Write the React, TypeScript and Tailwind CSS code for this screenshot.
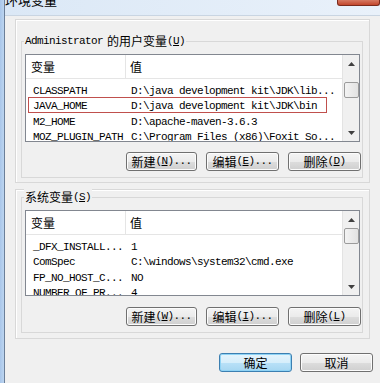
import React from "react";

const F = "font-['Liberation_Mono','Noto_Sans_CJK_SC',monospace]";
const CJK = "font-['Noto_Sans_CJK_SC','Liberation_Sans',sans-serif]";

function M({ children }: { children: React.ReactNode }) {
  return <span className={`${F} text-[11px] tracking-[-0.6px]`}>{children}</span>;
}

function Btn({ cn, w, def, children }: { cn: string; w: string; def?: boolean; children?: React.ReactNode }) {
  return (
    <div
      className={`${w} h-[19px] rounded-[3px] border flex items-center justify-center text-[12px] leading-none text-black ${
        def
          ? "border-[#3c7fb1] bg-[linear-gradient(#e5f4fc_0%,#d6eefb_50%,#b9e1f8_51%,#a6d6f1_100%)] shadow-[inset_0_0_0_1px_#8fd3f5]"
          : "border-[#707070] bg-[linear-gradient(#f4f4f4_0%,#ebebeb_50%,#dddddd_51%,#cfcfcf_100%)] shadow-[inset_0_0_0_1px_#fcfcfc]"
      }`}
    >
      <span className={CJK}>{cn}</span>
      {children}
    </div>
  );
}

function Scroll({ thumbTop }: { thumbTop: string }) {
  return (
    <div className="w-[17px] h-full bg-[#f0f0f0] border-l border-[#e3e3e3] flex flex-col items-center">
      <div className="h-[17px] w-full flex items-center justify-center">
        <svg width="7" height="4" viewBox="0 0 7 4"><path d="M0 4 L3.5 0 L7 4 Z" fill="#404040" /></svg>
      </div>
      <div className={`${thumbTop} w-[15px] h-[16px] rounded-[2px] border border-[#9b9b9b] bg-[linear-gradient(90deg,#f3f3f3,#e2e2e2)]`} />
      <div className="flex-1" />
      <div className="h-[17px] w-full flex items-center justify-center">
        <svg width="7" height="4" viewBox="0 0 7 4"><path d="M0 0 L3.5 4 L7 0 Z" fill="#404040" /></svg>
      </div>
    </div>
  );
}

function List({ rows, thumbTop, h, sel }: { rows: [string, string][]; thumbTop: string; h: string; sel?: number }) {
  return (
    <div className={`relative w-[335px] ${h} bg-white border border-[#828790] flex overflow-hidden`}>
      <div className="flex-1 flex flex-col">
        <div className="h-[24px] shrink-0 flex border-b border-[#e5e5e5] text-[12px]">
          <div className={`w-[100px] pl-[5px] border-r border-[#e5e5e5] flex items-center ${CJK}`}>变量</div>
          <div className={`pl-[4px] flex items-center ${CJK}`}>值</div>
        </div>
        <div className="pt-[1px]">
          {rows.map(([a, b], i) => (
            <div key={i} className="h-[15.5px] flex items-center whitespace-nowrap text-black">
              <div className="w-[101px] pl-[7px]"><M>{a}</M></div>
              <div className="pl-[4px]"><M>{b}</M></div>
            </div>
          ))}
        </div>
      </div>
      <Scroll thumbTop={thumbTop} />
      {sel !== undefined && (
        <div className="absolute left-[2px] top-[42px] w-[299px] h-[16px] border border-[#c0504d]" />
      )}
    </div>
  );
}

export default function App() {
  return (
    <div className="w-[380px] h-[383px] overflow-hidden flex bg-[#f0f0f0] text-black">
      <div className="w-[5px] h-full bg-[linear-gradient(90deg,#a9c6ea,#bcd5f0)] border-r border-[#6b7f99]" />
      <div className="flex-1 flex flex-col relative">
        <div className="h-[16px] bg-[linear-gradient(90deg,#dbe8f6,#e9f1fa)] border-b border-[#c9d5e2] overflow-hidden">
          <div className={`${CJK} text-[13px] leading-none mt-[-7px] ml-[0px] text-black`}>环境变量</div>
        </div>
        <div className="absolute top-0 right-0 w-[43px] h-[6px] rounded-b-[3px] bg-[linear-gradient(#d67a63,#c2462c)] border border-t-0 border-[#7a2a1c]" />
        <div className="flex-1 pl-[10px] pt-[3px]">
          {/* frame 1 */}
          <div className="w-[355px] h-[164px] border border-[#d8d8d8] shadow-[inset_1px_1px_0_#ffffff]">
            <div className="relative ml-[5px] mt-[21px] w-[342px] h-[137px] border border-[#d8d8d8]">
              <div className="absolute left-[2px] top-[-9px] bg-[#f0f0f0] px-[1px] flex items-center h-[16px] text-[12px] leading-none">
                <M>Administrator</M>
                <span className={`${CJK} ml-[4px]`}>的用户变量</span>
                <M>(<u>U</u>)</M>
              </div>
              <div className="ml-[3px] mt-[12px]">
                <List
                  h="h-[88px]"
                  thumbTop="mt-[10px]"
                  sel={1}
                  rows={[
                    ["CLASSPATH", "D:\\java development kit\\JDK\\lib..."],
                    ["JAVA_HOME", "D:\\java development kit\\JDK\\bin"],
                    ["M2_HOME", "D:\\apache-maven-3.6.3"],
                    ["MOZ_PLUGIN_PATH", "C:\\Program Files (x86)\\Foxit So..."],
                  ]}
                />
              </div>
              <div className="flex ml-[104px] mt-[10px] gap-[9px]">
                <Btn cn="新建" w="w-[71px]"><M>(<u>N</u>)...</M></Btn>
                <Btn cn="编辑" w="w-[73px]"><M>(<u>E</u>)...</M></Btn>
                <Btn cn="删除" w="w-[73px]"><M>(<u>D</u>)</M></Btn>
              </div>
            </div>
          </div>
          {/* frame 2 */}
          <div className="mt-[6px] w-[355px] h-[150px] border border-[#d8d8d8] shadow-[inset_1px_1px_0_#ffffff]">
            <div className="relative ml-[5px] mt-[7px] w-[342px] h-[136px] border border-[#d8d8d8]">
              <div className="absolute left-[2px] top-[-9px] bg-[#f0f0f0] px-[1px] flex items-center h-[16px] text-[12px] leading-none">
                <span className={CJK}>系统变量</span>
                <M>(<u>S</u>)</M>
              </div>
              <div className="ml-[3px] mt-[12px]">
                <List
                  h="h-[86px]"
                  thumbTop="mt-[0px]"
                  rows={[
                    ["_DFX_INSTALL...", "1"],
                    ["ComSpec", "C:\\windows\\system32\\cmd.exe"],
                    ["FP_NO_HOST_C...", "NO"],
                    ["NUMBER_OF_PR...", "4"],
                  ]}
                />
              </div>
              <div className="flex ml-[104px] mt-[11px] gap-[9px]">
                <Btn cn="新建" w="w-[71px]"><M>(<u>W</u>)...</M></Btn>
                <Btn cn="编辑" w="w-[73px]"><M>(<u>I</u>)...</M></Btn>
                <Btn cn="删除" w="w-[73px]"><M>(<u>L</u>)</M></Btn>
              </div>
            </div>
          </div>
          <div className="flex justify-end pr-[7px] mt-[14px] gap-[8px]">
            <Btn cn="确定" w="w-[73px]" def />
            <Btn cn="取消" w="w-[73px]" />
          </div>
        </div>
      </div>
    </div>
  );
}
